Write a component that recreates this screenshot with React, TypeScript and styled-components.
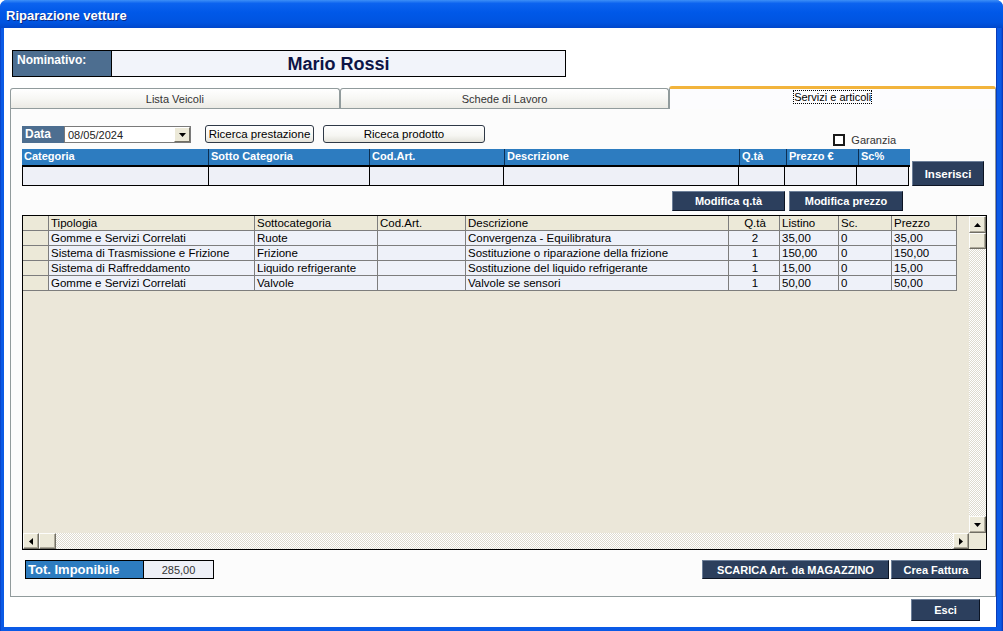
import React from "react";
import styled, { createGlobalStyle } from "styled-components";

const Global = createGlobalStyle`
  html, body { margin: 0; padding: 0; background: #ffffff; }
  body { width: 1003px; height: 631px; overflow: hidden; font-family: "Liberation Sans", Arial, sans-serif; }
  * { box-sizing: border-box; }
`;

const Window = styled.div`
  width: 1003px;
  height: 631px;
  display: flex;
  flex-direction: column;
  background: linear-gradient(90deg, #0831b0 0, #0a5ae6 1px, #0a5ae6 calc(100% - 2px), #0831b0 100%);
  border-radius: 7px 7px 0 0;
  overflow: hidden;
`;

const TitleBar = styled.div`
  height: 28px;
  flex: none;
  display: flex;
  align-items: center;
  padding: 2px 0 0 6px;
  background: linear-gradient(180deg, #3d8ff7 0%, #0c63ef 12%, #0058e8 45%, #0054e0 80%, #0047cb 100%);
  color: #ffffff;
  font-weight: bold;
  font-size: 13px;
  text-shadow: 1px 1px 0 #0b2b86;
`;

const Body = styled.div`
  flex: 1;
  margin: 0 6px 4px 4px;
  background: #ffffff;
  display: flex;
  flex-direction: column;
  padding: 22px 0 0 6px;
  border-right: 1px solid #0a3bb8;
`;

const NomBox = styled.div`
  margin-left: 2px;
  width: 554px;
  height: 27px;
  border: 1px solid #000;
  display: flex;
`;

const NomLabel = styled.div`
  width: 99px;
  background: #4d6e90;
  color: #ffffff;
  font-weight: bold;
  font-size: 12px;
  padding: 2px 0 0 4px;
  border-right: 1px solid #000;
`;

const NomValue = styled.div`
  flex: 1;
  background: #f2f4fa;
  display: flex;
  align-items: center;
  justify-content: center;
  font-weight: bold;
  font-size: 18px;
  color: #0d1446;
  padding-top: 1px;
`;

const TabStrip = styled.div`
  margin-top: 9px;
  height: 22px;
  display: flex;
  align-items: flex-end;
  position: relative;
  z-index: 1;
`;

const Tab = styled.div<{ $w: number; $active?: boolean }>`
  width: ${(p) => p.$w}px;
  height: ${(p) => (p.$active ? 23 : 20)}px;
  margin-bottom: ${(p) => (p.$active ? -1 : 0)}px;
  border: 1px solid #919b9c;
  border-bottom: none;
  border-top: ${(p) => (p.$active ? "3px solid #f2b43c" : "1px solid #919b9c")};
  border-radius: 3px 3px 0 0;
  background: ${(p) => (p.$active ? "#fcfcfe" : "linear-gradient(180deg, #ffffff 0%, #f7f7f4 50%, #ebeae4 100%)")};
  display: flex;
  justify-content: center;
  align-items: ${(p) => (p.$active ? "flex-start" : "center")};
  padding-top: ${(p) => (p.$active ? 2 : 0)}px;
  font-size: 11px;
  color: ${(p) => (p.$active ? "#000" : "#333")};
`;

const FocusText = styled.span`
  outline: 1px dotted #000;
  outline-offset: 0;
  line-height: 12px;
`;

const Panel = styled.div`
  height: 489px;
  border: 1px solid #919b9c;
  background: #fcfcfc;
  display: flex;
  flex-direction: column;
  padding: 16px 0 0 11px;
`;

const Toolbar = styled.div`
  width: 888px;
  height: 21px;
  display: flex;
  align-items: flex-start;
`;

const SlateLabel = styled.div<{ $w: number }>`
  width: ${(p) => p.$w}px;
  height: 17px;
  margin-top: 1px;
  background: #4d6e90;
  color: #fff;
  font-weight: bold;
  font-size: 12px;
  padding: 1px 0 0 3px;
`;

const DateBox = styled.div`
  width: 127px;
  height: 17px;
  margin-top: 1px;
  border: 1px solid #7a7a7a;
  background: #fff;
  display: flex;
  align-items: center;
  font-size: 11px;
  color: #222;
  padding-left: 3px;
`;

const DateText = styled.span`
  flex: 1;
`;

const DropBtn = styled.div`
  width: 16px;
  height: 15px;
  background: #ece9d8;
  border: 1px solid;
  border-color: #fff #716f64 #716f64 #fff;
  display: flex;
  align-items: center;
  justify-content: center;
`;

const LightButton = styled.div<{ $w: number; $ml: number }>`
  width: ${(p) => p.$w}px;
  margin-left: ${(p) => p.$ml}px;
  height: 18px;
  border: 1px solid #2f3947;
  border-radius: 3px;
  background: linear-gradient(180deg, #ffffff 0%, #f6f6f2 60%, #e3e2da 100%);
  display: flex;
  align-items: center;
  justify-content: center;
  font-size: 11.5px;
  color: #000;
`;

const Garanzia = styled.label`
  margin-left: auto;
  margin-right: 14px;
  align-self: flex-end;
  display: flex;
  align-items: center;
  font-size: 11px;
  color: #333;
  height: 12px;
`;

const CheckBox = styled.span`
  width: 12px;
  height: 12px;
  border: 2px solid #1a1a1a;
  background: #fff;
  margin-right: 6px;
`;

const EntryRow = styled.div`
  margin-top: 3px;
  display: flex;
  align-items: flex-end;
  gap: 2px;
`;

const EntryTable = styled.div`
  width: 888px;
  display: flex;
  flex-direction: column;
`;

const EntryHead = styled.div`
  display: flex;
  height: 18px;
  background: #2d7cc0;
  border-bottom: 2px solid #000;
`;

const HeadCell = styled.div<{ $w: number }>`
  width: ${(p) => p.$w}px;
  border-right: 1px solid #0c2f52;
  color: #fff;
  font-weight: bold;
  font-size: 11px;
  padding: 1px 0 0 2px;
  white-space: nowrap;
  &:last-child { border-right: none; }
`;

const EntryBody = styled.div`
  display: flex;
  height: 19px;
  width: 887px;
  border: 1px solid #000;
  border-top: none;
`;

const InCell = styled.div<{ $w: number }>`
  width: ${(p) => p.$w}px;
  background: #eef0f7;
  border-right: 1px solid #000;
  &:last-child { border-right: none; }
`;

const DarkButton = styled.div<{ $w: number; $h: number; $fs?: number }>`
  width: ${(p) => p.$w}px;
  height: ${(p) => p.$h}px;
  flex: none;
  background: #2c3f5d;
  border: 1px solid;
  border-color: #6d7f99 #0c1423 #0c1423 #6d7f99;
  color: #fff;
  font-weight: bold;
  font-size: ${(p) => p.$fs ?? 11}px;
  display: flex;
  align-items: center;
  justify-content: center;
  white-space: nowrap;
`;

const ModRow = styled.div`
  margin-top: 5px;
  width: 881px;
  display: flex;
  justify-content: flex-end;
  gap: 4px;
`;

const GridBox = styled.div`
  margin-top: 4px;
  width: 965px;
  height: 335px;
  border: 1px solid #000;
  background: #ebe7d9;
  display: grid;
  grid-template-columns: 1fr 17px;
  grid-template-rows: 1fr 16px;
`;

const TableArea = styled.div`
  overflow: hidden;
`;

const GRow = styled.div`
  display: flex;
  height: 15px;
`;

const GCell = styled.div<{ $w: number; $kind: "sel" | "head" | "data"; $center?: boolean }>`
  width: ${(p) => p.$w}px;
  flex: none;
  height: 15px;
  background: ${(p) => (p.$kind === "data" ? "#eef1f9" : "#ece9d8")};
  border-right: 1px solid #7d7d7d;
  border-bottom: 1px solid #7d7d7d;
  font-size: 11.5px;
  line-height: 14px;
  color: #000;
  padding: 0 0 0 2px;
  text-align: ${(p) => (p.$center ? "center" : "left")};
  white-space: nowrap;
  overflow: hidden;
`;

const VScroll = styled.div`
  display: flex;
  flex-direction: column;
`;

const HScroll = styled.div`
  display: flex;
`;

const Track = styled.div`
  flex: 1;
  background-color: #ffffff;
  background-image: conic-gradient(#dedbcf 25%, transparent 0 50%, #dedbcf 0 75%, transparent 0);
  background-size: 2px 2px;
`;

const SBtn = styled.div<{ $w: number; $h: number }>`
  width: ${(p) => p.$w}px;
  height: ${(p) => p.$h}px;
  flex: none;
  background: #ece9d8;
  border: 1px solid;
  border-color: #fdfdfb #716f64 #716f64 #fdfdfb;
  box-shadow: inset -1px -1px 0 #aca899;
  display: flex;
  align-items: center;
  justify-content: center;
`;

const Corner = styled.div`
  background: #ece9d8;
`;

const BottomRow = styled.div`
  margin-top: 10px;
  width: 959px;
  height: 19px;
  display: flex;
  align-items: stretch;
  padding-left: 3px;
  gap: 2px;
`;

const TotBox = styled.div`
  display: flex;
  border: 1px solid #000;
  margin-right: auto;
`;

const TotLabel = styled.div`
  width: 118px;
  background: #2d7cc0;
  color: #fff;
  font-weight: bold;
  font-size: 13px;
  padding: 1px 0 0 2px;
  border-right: 1px solid #000;
`;

const TotValue = styled.div`
  width: 69px;
  background: #eef0f7;
  font-size: 11px;
  color: #333;
  display: flex;
  align-items: center;
  justify-content: center;
`;

const EsciRow = styled.div`
  margin-top: 2px;
  display: flex;
  justify-content: flex-end;
  padding-right: 16px;
`;

const Arrow = ({ dir }: { dir: "up" | "down" | "left" | "right" }) => {
  const pts = {
    up: "0,4 7,4 3.5,0",
    down: "0,0 7,0 3.5,4",
    left: "4,0 4,7 0,3.5",
    right: "0,0 0,7 4,3.5",
  }[dir];
  const horiz = dir === "left" || dir === "right";
  return (
    <svg width={horiz ? 4 : 7} height={horiz ? 7 : 4} viewBox={horiz ? "0 0 4 7" : "0 0 7 4"}>
      <polygon points={pts} fill="#000" />
    </svg>
  );
};

const entryCols: [string, number][] = [
  ["Categoria", 187],
  ["Sotto Categoria", 161],
  ["Cod.Art.", 135],
  ["Descrizione", 235],
  ["Q.tà", 47],
  ["Prezzo €", 72],
  ["Sc%", 51],
];

const gridCols: [string, number, boolean?][] = [
  ["", 26],
  ["Tipologia", 206],
  ["Sottocategoria", 123],
  ["Cod.Art.", 88],
  ["Descrizione", 263],
  ["Q.tà", 51, true],
  ["Listino", 59],
  ["Sc.", 53],
  ["Prezzo", 65],
];

const rows: string[][] = [
  ["Gomme e Servizi Correlati", "Ruote", "", "Convergenza - Equilibratura", "2", "35,00", "0", "35,00"],
  ["Sistema di Trasmissione e Frizione", "Frizione", "", "Sostituzione o riparazione della frizione", "1", "150,00", "0", "150,00"],
  ["Sistema di Raffreddamento", "Liquido refrigerante", "", "Sostituzione del liquido refrigerante", "1", "15,00", "0", "15,00"],
  ["Gomme e Servizi Correlati", "Valvole", "", "Valvole se sensori", "1", "50,00", "0", "50,00"],
];

export default function App() {
  return (
    <>
      <Global />
      <Window>
        <TitleBar>Riparazione vetture</TitleBar>
        <Body>
          <NomBox>
            <NomLabel>Nominativo:</NomLabel>
            <NomValue>Mario Rossi</NomValue>
          </NomBox>

          <TabStrip>
            <Tab $w={330}>Lista Veicoli</Tab>
            <Tab $w={330}>Schede di Lavoro</Tab>
            <Tab $w={327} $active>
              <FocusText>Servizi e articoli</FocusText>
            </Tab>
          </TabStrip>

          <Panel>
            <Toolbar>
              <SlateLabel $w={42}>Data</SlateLabel>
              <DateBox>
                <DateText>08/05/2024</DateText>
                <DropBtn>
                  <Arrow dir="down" />
                </DropBtn>
              </DateBox>
              <LightButton $w={109} $ml={14}>Ricerca prestazione</LightButton>
              <LightButton $w={162} $ml={9}>Riceca prodotto</LightButton>
              <Garanzia>
                <CheckBox />
                Garanzia
              </Garanzia>
            </Toolbar>

            <EntryRow>
              <EntryTable>
                <EntryHead>
                  {entryCols.map(([t, w]) => (
                    <HeadCell key={t} $w={w}>{t}</HeadCell>
                  ))}
                </EntryHead>
                <EntryBody>
                  {entryCols.map(([t, w]) => (
                    <InCell key={t} $w={w} />
                  ))}
                </EntryBody>
              </EntryTable>
              <DarkButton $w={72} $h={25} $fs={11.5}>Inserisci</DarkButton>
            </EntryRow>

            <ModRow>
              <DarkButton $w={113} $h={20}>Modifica q.tà</DarkButton>
              <DarkButton $w={114} $h={20}>Modifica prezzo</DarkButton>
            </ModRow>

            <GridBox>
              <TableArea>
                <GRow>
                  {gridCols.map(([t, w, c], i) => (
                    <GCell key={i} $w={w} $kind={i === 0 ? "sel" : "head"} $center={c}>{t}</GCell>
                  ))}
                </GRow>
                {rows.map((r, ri) => (
                  <GRow key={ri}>
                    <GCell $w={26} $kind="sel" />
                    {r.map((v, ci) => (
                      <GCell key={ci} $w={gridCols[ci + 1][1]} $kind="data" $center={gridCols[ci + 1][2]}>
                        {v}
                      </GCell>
                    ))}
                  </GRow>
                ))}
              </TableArea>
              <VScroll>
                <SBtn $w={17} $h={17}><Arrow dir="up" /></SBtn>
                <SBtn $w={17} $h={16} />
                <Track />
                <SBtn $w={17} $h={17}><Arrow dir="down" /></SBtn>
              </VScroll>
              <HScroll>
                <SBtn $w={16} $h={16}><Arrow dir="left" /></SBtn>
                <SBtn $w={17} $h={16} />
                <Track />
                <SBtn $w={16} $h={16}><Arrow dir="right" /></SBtn>
              </HScroll>
              <Corner />
            </GridBox>

            <BottomRow>
              <TotBox>
                <TotLabel>Tot. Imponibile</TotLabel>
                <TotValue>285,00</TotValue>
              </TotBox>
              <DarkButton $w={187} $h={19}>SCARICA Art. da MAGAZZINO</DarkButton>
              <DarkButton $w={90} $h={19}>Crea Fattura</DarkButton>
            </BottomRow>
          </Panel>

          <EsciRow>
            <DarkButton $w={69} $h={22}>Esci</DarkButton>
          </EsciRow>
        </Body>
      </Window>
    </>
  );
}
